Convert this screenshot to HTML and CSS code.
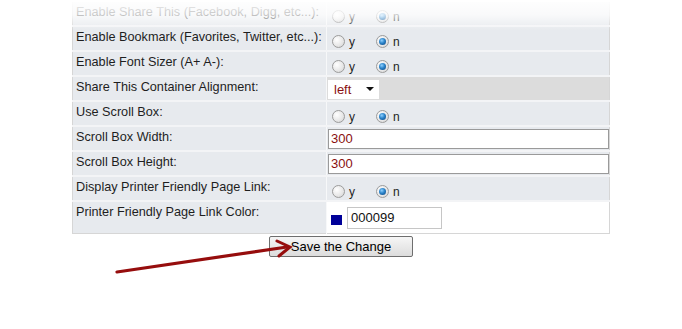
FILE: index.html
```html
<!DOCTYPE html>
<html>
<head>
<meta charset="utf-8">
<link rel="stylesheet" href="styles.css">
</head>
<body>
<div class="page">
  <table class="opts">
    <tr class="r0">
      <td class="lbl">Enable Share This (Facebook, Digg, etc...):</td>
      <td class="val"><div class="cell radios">
        <span class="radio"></span><span class="rl">y</span>
        <span class="radio on"></span><span class="rl">n</span></div></td>
    </tr>
    <tr>
      <td class="lbl">Enable Bookmark (Favorites, Twitter, etc...):</td>
      <td class="val"><div class="cell radios">
        <span class="radio"></span><span class="rl">y</span>
        <span class="radio on"></span><span class="rl">n</span></div></td>
    </tr>
    <tr>
      <td class="lbl">Enable Font Sizer (A+ A-):</td>
      <td class="val"><div class="cell radios">
        <span class="radio"></span><span class="rl">y</span>
        <span class="radio on"></span><span class="rl">n</span></div></td>
    </tr>
    <tr>
      <td class="lbl">Share This Container Alignment:</td>
      <td class="val dark"><div class="cell">
        <div class="select"><span>left</span><span class="caret"></span></div></div></td>
    </tr>
    <tr>
      <td class="lbl">Use Scroll Box:</td>
      <td class="val"><div class="cell radios">
        <span class="radio"></span><span class="rl">y</span>
        <span class="radio on"></span><span class="rl">n</span></div></td>
    </tr>
    <tr>
      <td class="lbl">Scroll Box Width:</td>
      <td class="val"><div class="cell"><div class="text">300</div></div></td>
    </tr>
    <tr>
      <td class="lbl">Scroll Box Height:</td>
      <td class="val"><div class="cell"><div class="text">300</div></div></td>
    </tr>
    <tr>
      <td class="lbl">Display Printer Friendly Page Link:</td>
      <td class="val"><div class="cell radios">
        <span class="radio"></span><span class="rl">y</span>
        <span class="radio on"></span><span class="rl">n</span></div></td>
    </tr>
    <tr class="last">
      <td class="lbl">Printer Friendly Page Link Color:</td>
      <td class="val white"><div class="cell tall">
        <span class="swatch"></span><div class="color">000099</div></div></td>
    </tr>
  </table>
  <div class="actions"><button class="save">Save the Change</button></div>
  <div class="fade"></div>
  <svg class="arrow" width="682" height="329" viewBox="0 0 682 329">
    <line x1="117" y1="272" x2="287" y2="247" stroke="#960d0d" stroke-width="3.2" stroke-linecap="round"/>
    <polyline points="277,241 290,247 279,256" fill="none" stroke="#960d0d" stroke-width="3" stroke-linecap="round" stroke-linejoin="miter"/>
  </svg>
</div>
</body>
</html>
```
FILE: styles.css
```css
html, body { margin: 0; padding: 0; background: #fff; }
body { font-family: "Liberation Sans", Arial, sans-serif; color: #1e1e1e; }
.page { position: relative; width: 682px; height: 329px; overflow: hidden; padding: 2px 0 0 72px; box-sizing: border-box; }
.opts { border-collapse: collapse; width: 538px; border: 1px solid #d6d6d6; border-top: none; }
.opts td { padding: 0; border-bottom: 2px solid #f3f4f6; background: #e7eaee; vertical-align: top; }
.opts tr.last td { border-bottom: none; }
.lbl { width: 252px; font-size: 12.7px; padding: 3px 3px 0 3px !important; height: 20px; line-height: 15px; white-space: nowrap; box-sizing: content-box; }
.val { border-left: 1px solid #f7f8f9; }
.val.dark { background: #dcdcdc !important; }
.val.white { background: #fff !important; }
.cell { height: 23px; display: flex; align-items: center; padding-left: 1px; box-sizing: border-box; }
.cell.tall { height: 31px; padding-left: 4px; }
.radios { align-items: flex-end; padding: 0 0 2px 5px; }
.radio { width: 11px; height: 11px; border-radius: 50%; border: 1px solid #9c9c9c; background: radial-gradient(circle at 35% 35%, #fff 0%, #e6e6e6 60%, #cfcfcf 100%); position: relative; box-sizing: content-box; }
.radio.on::after { content: ""; position: absolute; left: 2px; top: 2px; width: 7px; height: 7px; border-radius: 50%; background: radial-gradient(circle at 40% 35%, #8fd0ff 0%, #2a83c9 45%, #0b3f7a 100%); }
.rl { font-size: 12px; margin: 0 21px 0 4px; line-height: 12px; }
.select { width: 51px; height: 19px; background: #fff; display: flex; align-items: center; justify-content: space-between; padding: 0 5px 0 6px; box-sizing: border-box; font-size: 13px; color: #8a1010; margin-top: 1px; }
.caret { width: 0; height: 0; border-left: 4px solid transparent; border-right: 4px solid transparent; border-top: 4px solid #111; }
.text { width: 281px; height: 20px; border: 1px solid #9a9a9a; background: #fff; box-sizing: border-box; font-size: 13px; color: #8a1010; line-height: 18px; padding-left: 2px; }
.swatch { width: 11px; height: 10px; background: #000099; margin-right: 5px; margin-top: 4px; }
.color { width: 95px; height: 22px; border: 1px solid #c6c6c6; box-sizing: border-box; font-size: 13px; color: #111; line-height: 20px; padding-left: 3px; background: #fff; }
.actions { width: 538px; display: flex; justify-content: center; padding-top: 2px; }
.save { width: 144px; height: 21px; border: 1px solid #6e6e6e; border-radius: 2px; background: linear-gradient(#f6f6f6, #dcdcdc); font-family: "Liberation Sans", Arial, sans-serif; font-size: 13px; color: #000; padding: 0; line-height: 19px; }
.fade { position: absolute; left: 0; top: 0; width: 682px; height: 30px; background: linear-gradient(rgba(255,255,255,0.97), rgba(255,255,255,0.75) 50%, rgba(255,255,255,0) 100%); pointer-events: none; }
.arrow { position: absolute; left: 0; top: 0; pointer-events: none; }
```
